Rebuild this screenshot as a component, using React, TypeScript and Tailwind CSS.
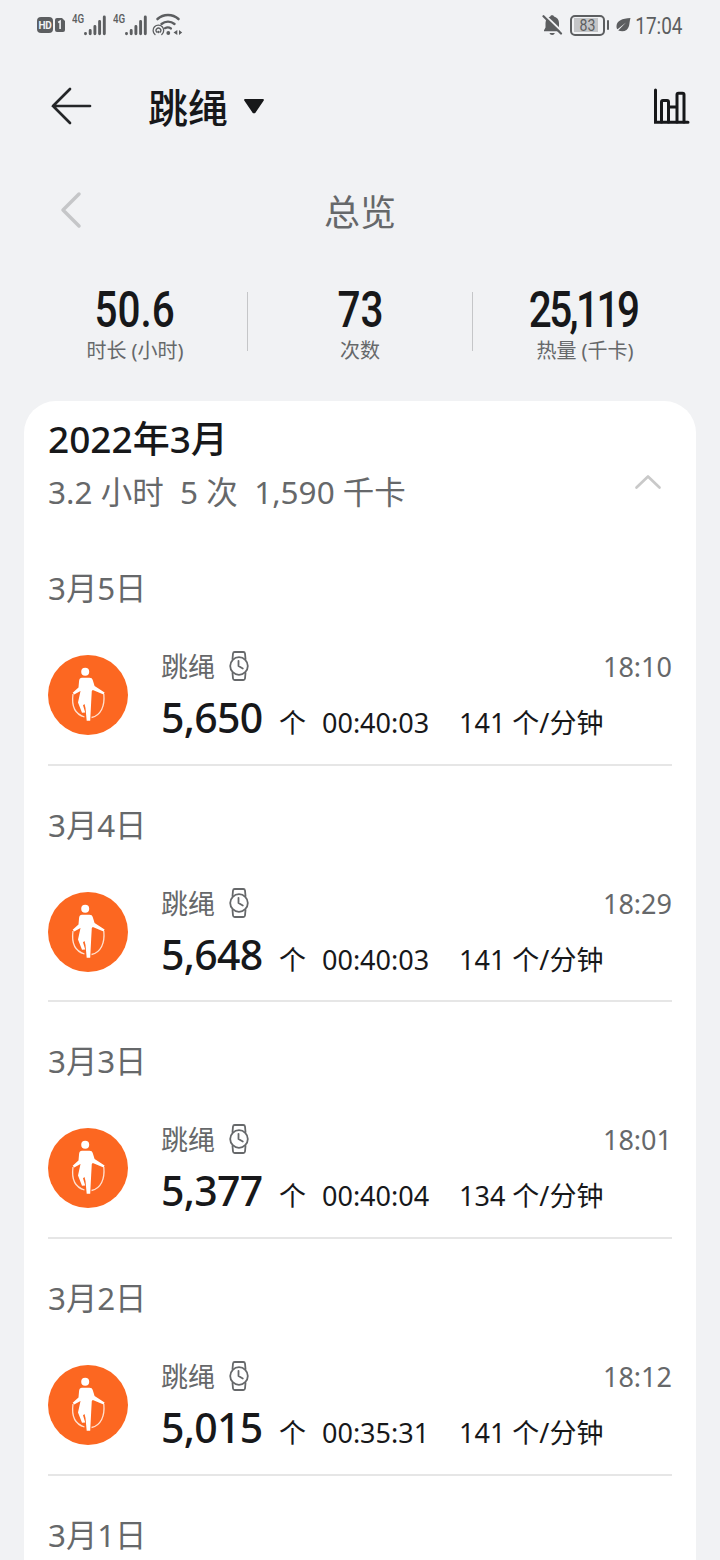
type Workout = {
  date: string;
  time: string;
  count: string;
  duration: string;
  pace: string;
};

const workouts: Workout[] = [
  { date: "3月5日", time: "18:10", count: "5,650", duration: "00:40:03", pace: "141" },
  { date: "3月4日", time: "18:29", count: "5,648", duration: "00:40:03", pace: "141" },
  { date: "3月3日", time: "18:01", count: "5,377", duration: "00:40:04", pace: "134" },
  { date: "3月2日", time: "18:12", count: "5,015", duration: "00:35:31", pace: "141" },
];

function SignalBars() {
  return (
    <svg width="22" height="21" viewBox="0 0 22 21" stroke="#5c5e60" strokeWidth="2.9" strokeLinecap="round">
      <path d="M1.500 18.500v.2M6.200 15.500v3.200M10.900 11.500v7.200M15.600 6.500v12.200M20.300 2v16.700" />
    </svg>
  );
}

function NetworkLabel() {
  return (
    <div className="mb-[13px] w-[12px] font-['Roboto',sans-serif] text-[13px] leading-3 font-medium">
      <span className="inline-block origin-left scale-x-[.75]">4G</span>
    </div>
  );
}

function StatusBar() {
  return (
    <div className="flex h-[50px] items-center px-[36px] text-[#5c5e60]">
      <div className="ml-px flex h-4 w-4 items-center justify-center rounded-[4px] bg-[#5c5e60] font-['Roboto',sans-serif] text-[10px] font-bold tracking-tight text-[#f1f2f4]">
        HD
      </div>
      <svg className="ml-[2px]" width="10" height="14" viewBox="0 0 10 14">
        <path d="M2 0h5l3 3v9a2 2 0 0 1-2 2H2a2 2 0 0 1-2-2V2a2 2 0 0 1 2-2z" fill="#5c5e60" />
        <path d="M3.200 4.500 5.100 3.200V11" fill="none" stroke="#f1f2f4" strokeWidth="1.600" />
      </svg>
      <div className="ml-[7px] flex items-center">
        <NetworkLabel />
        <SignalBars />
      </div>
      <div className="ml-[7px] flex items-center">
        <NetworkLabel />
        <SignalBars />
      </div>
      <svg className="ml-[5px]" width="32" height="24" viewBox="0 0 32 24" fill="none" stroke="#5c5e60" strokeLinecap="round">
        <path d="M5.500 6a16 16 0 0 1 21 0" strokeWidth="2.600" />
        <path d="M9.500 11a10 10 0 0 1 13 0" strokeWidth="2.400" />
        <path d="M13 15.200a6 6 0 0 1 6 .3" strokeWidth="2.200" />
        <circle cx="16.300" cy="20" r="1.900" fill="#5c5e60" stroke="none" />
        <path d="M3 21.500a5.300 5.300 0 1 1 6.800 0M4.600 19a2.400 2.400 0 1 1 3.700 0" strokeWidth="1.300" />
        <circle cx="6.400" cy="19" r="1.200" fill="#5c5e60" stroke="none" />
        <path d="M25.300 17v5l-3.800-2.500zM27 17v5l3.200-2.500z" fill="#5c5e60" stroke="none" />
      </svg>

      <svg className="ml-auto" width="21" height="22" viewBox="0 0 21 22">
        <path d="M10 1.200c1 0 1.800.5 2 1.400 3 .8 5 3.200 5 6.400v4.500l1.700 2.800v1H2v-1l1.500-2.800V9c0-3.200 2-5.600 4.800-6.400.2-.9.800-1.400 1.700-1.400z" fill="#5c5e60" />
        <path d="M7.500 19h5.300c-.3 1.300-1.300 2-2.600 2s-2.400-.7-2.700-2z" fill="#5c5e60" />
        <path d="M2.500.7 20.500 18" stroke="#f1f2f4" strokeWidth="2" />
        <path d="M1.500 2.200 19 19.500" stroke="#5c5e60" strokeWidth="2.200" strokeLinecap="round" />
      </svg>
      <div className="ml-[7px] flex h-[21px] w-[35px] items-center justify-center rounded-[5px] border-2 border-[#5c5e60]">
        <div className="flex h-[14px] w-[27px] items-center justify-center bg-gradient-to-r from-[#c4c5c7] from-90% to-[#f1f2f4] to-90% font-['Roboto',sans-serif] text-[17px] leading-none">
          <span className="inline-block scale-x-[.83]">83</span>
        </div>
      </div>
      <div className="ml-[2px] h-[10px] w-[2px] rounded-full bg-[#5c5e60]" />
      <svg className="ml-[7px]" width="15" height="14" viewBox="0 0 15 14">
        <path d="M14.500 0C6 .5 1 2.500.5 8c0 1.500.2 2.500 1 3.300L10 4.500 2.200 12.500c5.500 2 9.500 0 10.800-4.500.7-2.500.5-5 1.500-8z" fill="#5c5e60" />
      </svg>
      <div className="ml-[3px] flex w-[50px] justify-center pt-[2px] font-['Roboto',sans-serif] text-[24px] leading-none">
        <span className="inline-block scale-x-[.79]">17:04</span>
      </div>
    </div>
  );
}

function TitleBar() {
  return (
    <div className="flex h-[112px] items-center pl-[50px] pr-[30px]">
      <svg width="42" height="38" viewBox="0 0 42 38" fill="none" stroke="#242628" strokeWidth="2.700" strokeLinecap="round">
        <path d="M20 2 3 19 20 36M3 19H40" />
      </svg>
      <h1 className="ml-[56px] pt-[3px] text-[40px] leading-none font-medium text-[#17181a]">跳绳</h1>
      <svg className="ml-[15px]" width="22" height="15" viewBox="0 0 22 15">
        <path d="M2 1h18L12 12.800q-1 1.200-2 0z" fill="#17181a" stroke="#17181a" strokeWidth="1.800" strokeLinejoin="round" />
      </svg>
      <svg className="ml-auto" width="37" height="36" viewBox="0 0 37 36" fill="none" stroke="#17181a" strokeWidth="3" strokeLinecap="round">
        <path d="M2.500 2V34.200H35" />
        <path d="M8.500 34V14Q8.500 12.500 10 12.500H14Q15.500 12.500 15.500 14V34M15.500 19H24M24 34V6.800Q24 5.300 25.500 5.300H29.500Q31 5.300 31 6.800V34" />
      </svg>
    </div>
  );
}

type StatProps = {
  value: string;
  label: string;
  tight?: boolean;
};

function Stat({ value, label, tight }: StatProps) {
  return (
    <div className="flex w-[224px] flex-col items-center">
      <span
        className={[
          "scale-x-[.81] font-['Roboto',sans-serif] text-[50px] leading-[50px] font-medium text-[#17181a]",
          tight ? "-ml-[3px] tracking-[-3.2px]" : "",
        ].join(" ")}
      >
        {value}
      </span>
      <span className="mt-[4px] text-[20px] leading-[24px] text-[#66686a]">{label}</span>
    </div>
  );
}

function JumpRopeIcon() {
  return (
    <svg className="size-20 shrink-0" viewBox="0 0 80 80">
      <circle cx="40" cy="40" r="40" fill="#fc6721" />
      <circle cx="37.200" cy="16.800" r="4" fill="#fff" />
      <path
        d="M34 22.700h7.500c1.800 0 2.900.8 3.300 2.500l1.800 5.800 10 6.500-1 2L44.800 35l-1 1-.6 10.500-1 19.300h-3.500L37.500 53l-1-4-1.500 1.200 2.200 7.300-3.200.3-4-10.300 2.500-11.500-6.300 3.500-1.500-1.800 5.800-5.200.6-6.800c.2-1.800 1.200-3 2.900-3z"
        fill="#fff"
      />
      <path d="M25 39c-1.500 11 1.500 20 11.500 23M43.500 62.500C53 60.500 57 51 55.800 39" fill="none" stroke="#ffe0cf" strokeWidth="1.300" />
    </svg>
  );
}

function WatchIcon() {
  return (
    <svg width="20" height="30" viewBox="0 0 20 30" fill="none" stroke="#66686a" strokeWidth="1.800" strokeLinecap="round" strokeLinejoin="round">
      <circle cx="10" cy="15" r="8.800" />
      <path d="M3.500 8 4 2.500Q4.200 1 5.700 1h8.600Q15.800 1 16 2.500L16.500 8M3.500 22l.5 5.500Q4.200 29 5.700 29h8.600q1.500 0 1.700-1.500l.5-5.500M9.500 9.800V15l4.300 2.500" />
    </svg>
  );
}

function DateHeading({ date }: { date: string }) {
  return <h3 className="h-[40px] text-[31.3px] leading-[40px] text-[#66686a]">{date}</h3>;
}

function WorkoutSection({ workout }: { workout: Workout }) {
  return (
    <section className="h-[236.67px] border-b-2 border-[#e6e6e6] pt-[39px]">
      <DateHeading date={workout.date} />
      <div className="mt-[47px] flex">
        <JumpRopeIcon />
        <div className="-mt-[5px] ml-[33px] flex-1">
          <div className="flex h-[32px] items-center text-[27px] leading-none text-[#66686a]">
            <span className="pt-px">跳绳</span>
            <span className="ml-[14px]">
              <WatchIcon />
            </span>
            <span className="ml-auto pt-px">{workout.time}</span>
          </div>
          <div className="mt-[15px] flex h-[50px] items-baseline text-[27px] leading-none whitespace-pre text-[#17181a]">
            <span className="w-[118px] text-[41px] font-medium tracking-[-.7px]">{workout.count}</span>
            <span className="w-[43px]">个</span>
            <span className="w-[137px]">{workout.duration}</span>
            <span>{workout.pace} 个/分钟</span>
          </div>
        </div>
      </div>
    </section>
  );
}

export default function App() {
  return (
    <div className="h-[1560px] w-[720px] overflow-hidden bg-[#f1f2f4] font-['Noto_Sans','Noto_Sans_CJK_SC',sans-serif]">
      <StatusBar />
      <TitleBar />

      <div className="flex h-[96px] items-center px-[60px] text-[#66686a]">
        <svg width="22" height="38" viewBox="0 0 22 38" fill="none" stroke="#c5c6c8" strokeWidth="3.500" strokeLinecap="round" strokeLinejoin="round">
          <path d="M19 3 3 19 19 35" />
        </svg>
        <h2 className="flex-1 pt-[5px] pr-[22px] text-center text-[36px] leading-none">总览</h2>
      </div>

      <div className="flex h-[143px] justify-center pt-[27px]">
        <Stat value="50.6" label="时长 (小时)" />
        <div className="mt-[7px] h-[59px] w-px bg-[#c5c6c8]" />
        <Stat value="73" label="次数" />
        <div className="mt-[7px] h-[59px] w-px bg-[#c5c6c8]" />
        <Stat value="25,119" label="热量 (千卡)" tight />
      </div>

      <main className="mx-6 h-[1159px] rounded-t-[32px] bg-white px-6">
        <header className="flex h-[128px] items-start justify-between pt-[13px]">
          <div>
            <h2 className="h-[50px] text-[37px] leading-[50px] font-medium text-[#17181a]">2022年3月</h2>
            <p className="mt-[6px] h-[44px] text-[31.5px] leading-[44px] whitespace-pre text-[#66686a]">3.2 小时  5 次  1,590 千卡</p>
          </div>
          <svg className="mt-[59px] mr-[10px]" width="28" height="18" viewBox="0 0 28 18" fill="none" stroke="#c9c9c9" strokeWidth="2.700" strokeLinecap="round" strokeLinejoin="round">
            <path d="M2.500 14.500 14 3.500 25.500 14.500" />
          </svg>
        </header>
        {workouts.map((workout) => (
          <WorkoutSection key={workout.date} workout={workout} />
        ))}
        <div className="pt-[39px]">
          <DateHeading date="3月1日" />
        </div>
      </main>
    </div>
  );
}
